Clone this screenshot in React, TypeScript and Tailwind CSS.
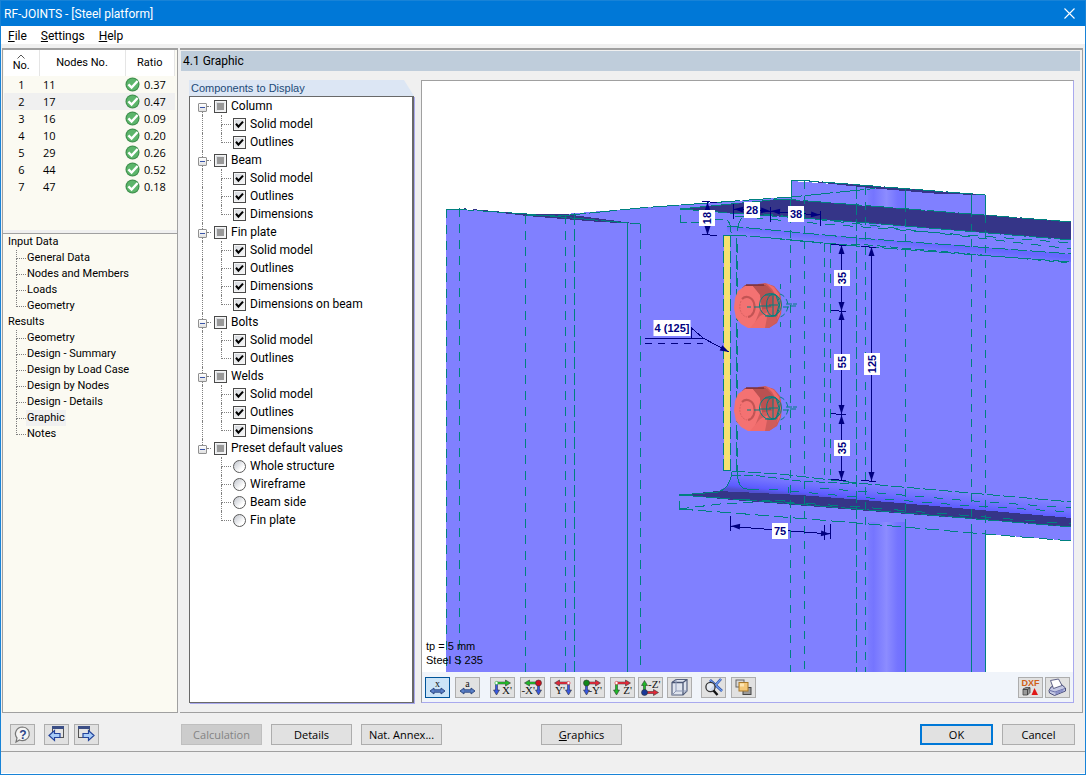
import React from "react";
import { clsx } from "clsx";

const RESULTS = [
  { no: 1, node: 11, ratio: "0.37" },
  { no: 2, node: 17, ratio: "0.47" },
  { no: 3, node: 16, ratio: "0.09" },
  { no: 4, node: 10, ratio: "0.20" },
  { no: 5, node: 29, ratio: "0.26" },
  { no: 6, node: 44, ratio: "0.52" },
  { no: 7, node: 47, ratio: "0.18" },
];

const NAVIGATION = [
  { title: "Input Data", items: ["General Data", "Nodes and Members", "Loads", "Geometry"] },
  {
    title: "Results",
    items: ["Geometry", "Design - Summary", "Design by Load Case", "Design by Nodes", "Design - Details", "Graphic", "Notes"],
  },
];

const COMPONENTS = [
  { title: "Column", radio: false, items: ["Solid model", "Outlines"] },
  { title: "Beam", radio: false, items: ["Solid model", "Outlines", "Dimensions"] },
  { title: "Fin plate", radio: false, items: ["Solid model", "Outlines", "Dimensions", "Dimensions on beam"] },
  { title: "Bolts", radio: false, items: ["Solid model", "Outlines"] },
  { title: "Welds", radio: false, items: ["Solid model", "Outlines", "Dimensions"] },
  { title: "Preset default values", radio: true, items: ["Whole structure", "Wireframe", "Beam side", "Fin plate"] },
];

function Branch({ last }: { last: boolean }) {
  return (
    <span className="flex w-[10px] shrink-0 flex-col self-stretch">
      <span className="flex-1 border-b border-l border-dotted border-[#808080]" />
      <span className={clsx("flex-1", !last && "border-l border-dotted border-[#808080]")} />
    </span>
  );
}

function PassIcon() {
  return (
    <svg width="15" height="15" viewBox="0 0 15 15" className="shrink-0" aria-hidden="true">
      <circle cx="7.5" cy="7.5" r="7" fill="#3f8f4d" />
      <circle cx="7.5" cy="7.5" r="5.9" fill="#5cb56b" />
      <path d="M3.4 7.4 L6.6 10.6 L12.6 4" fill="none" stroke="#fff" strokeWidth="2.4" />
    </svg>
  );
}

function ResultsTable() {
  return (
    <div className="h-[180px] bg-[#fbfaf2] pr-[2px] pl-px">
      <table className="w-full table-fixed border-collapse text-[11px]">
        <colgroup>
          <col className="w-[35px]" />
          <col className="w-[86px]" />
          <col />
        </colgroup>
        <thead>
          <tr className="h-[26px] bg-white font-['Roboto',sans-serif]">
            <th className="border-r border-[#e5e5e5] p-0 font-normal">
              <span className="flex flex-col items-center">
                <svg width="8" height="5" viewBox="0 0 8 5" aria-hidden="true">
                  <path d="M0.5 4.5 L4 1 L7.5 4.5" fill="none" stroke="#555" />
                </svg>
                <span className="leading-[14px]">No.</span>
              </span>
            </th>
            <th className="border-r border-[#e5e5e5] p-0 font-normal">Nodes No.</th>
            <th className="border-r border-[#e5e5e5] p-0 font-normal">Ratio</th>
          </tr>
        </thead>
        <tbody>
          {RESULTS.map((row) => (
            <tr key={row.no} className={clsx("h-[17px] leading-[17px]", row.no === 2 && "bg-[#f0f0f0]")}>
              <td className="p-0 text-center">{row.no}</td>
              <td className="p-0 pl-1">{row.node}</td>
              <td className="p-0">
                <span className="flex h-[17px] items-center gap-1">
                  <PassIcon />
                  {row.ratio}
                </span>
              </td>
            </tr>
          ))}
        </tbody>
      </table>
    </div>
  );
}

function Navigation() {
  return (
    <nav className="flex-1 bg-[#fbfaf2] pl-[5px] font-['Roboto',sans-serif] text-[11px] leading-4">
      {NAVIGATION.map((group) => (
        <div key={group.title}>
          <h2>{group.title}</h2>
          <ul className="pl-2">
            {group.items.map((item, i) => (
              <li key={item} className="flex h-4 items-center">
                <Branch last={i === group.items.length - 1} />
                <a href="#view" className={clsx("px-px whitespace-nowrap", item === "Graphic" && "bg-[#f0f0f0]")}>
                  {item}
                </a>
              </li>
            ))}
          </ul>
        </div>
      ))}
    </nav>
  );
}

function CheckBox({ label, mixed }: { label: string; mixed?: boolean }) {
  return (
    <label className="flex items-center gap-1 whitespace-nowrap">
      <span className="grid place-items-center">
        <input
          type="checkbox"
          defaultChecked={!mixed}
          className="peer col-start-1 row-start-1 size-[13px] appearance-none border border-[#4a4a4a] bg-linear-to-br from-[#d2d6dc] to-[#fafafa] shadow-[inset_0_0_0_1px_#f4f4f4]"
        />
        {mixed ? (
          <span className="pointer-events-none col-start-1 row-start-1 size-[7px] bg-[#999]" />
        ) : (
          <svg
            width="9"
            height="9"
            viewBox="0 0 9 9"
            className="pointer-events-none invisible col-start-1 row-start-1 peer-checked:visible"
            aria-hidden="true"
          >
            <path d="M1 3.8 L3.4 6.6 L8 1.6" fill="none" stroke="#000" strokeWidth="2.1" />
          </svg>
        )}
      </span>
      {label}
    </label>
  );
}

function RadioButton({ label }: { label: string }) {
  return (
    <label className="flex items-center gap-1 whitespace-nowrap">
      <input
        type="radio"
        name="preset"
        className="size-[13px] appearance-none rounded-full border border-[#5a5a5a] bg-linear-to-br from-[#c0c4cc] to-white to-70% checked:bg-[#666]"
      />
      {label}
    </label>
  );
}

function ComponentTree() {
  return (
    <section className="flex w-[225px] shrink-0 flex-col">
      <h2 className="h-4 bg-[#dce6f4] pl-[2px] font-['Liberation_Sans',sans-serif] text-[11px] leading-4 text-[#1c4a78] [clip-path:polygon(0_0,calc(100%-10px)_0,100%_100%,0_100%)]">
        Components to Display
      </h2>
      <ul className="flex-1 border border-r-2 border-[#696969] bg-white pl-2 font-['Roboto',sans-serif] text-[12px] leading-[18px] shadow-[1px_1px_0_#a9a9ee]">
        {COMPONENTS.map((group, g) => {
          const lastGroup = g === COMPONENTS.length - 1;
          return (
            <li key={group.title}>
              <div className="flex h-[18px] items-center">
                <span className="flex w-[9px] flex-col items-center self-stretch">
                  <span className={clsx("h-[6px]", g > 0 && "border-l border-dotted border-[#808080]")} />
                  <button
                    aria-label={"Collapse " + group.title}
                    className="grid size-[9px] shrink-0 place-items-center rounded-[1px] border border-[#919191] bg-linear-to-b from-white to-[#e0e0e0]"
                  >
                    <span className="h-px w-[5px] bg-[#3a55a8]" />
                  </button>
                  {!lastGroup && <span className="flex-1 border-l border-dotted border-[#808080]" />}
                </span>
                <span className="mr-[3px] w-1 border-b border-dotted border-[#808080]" />
                <CheckBox label={group.title} mixed />
              </div>
              <ul className="pl-1">
                {group.items.map((item, i) => (
                  <li key={item} className="flex h-[18px] items-center">
                    <span className={clsx("w-[19px] self-stretch", !lastGroup && "border-l border-dotted border-[#808080]")} />
                    <Branch last={i === group.items.length - 1} />
                    <span className="w-[2px]" />
                    {group.radio ? <RadioButton label={item} /> : <CheckBox label={item} />}
                  </li>
                ))}
              </ul>
            </li>
          );
        })}
      </ul>
    </section>
  );
}

function Bolt({ y }: { y: number }) {
  return (
    <g transform={`translate(0 ${y})`}>
      <path d="M758 -22 L765 -23 L774 -20 L780 -13 L782 -2 L781 8 L777 17 L769 22 L760 22 L752 12 Z" fill="#cc5858" />
      <path d="M766 -23 L774 -19 L779 -12 L781 0 L780 8 L777 14 L779 4 L777 -8 L772 -17 Z" fill="#f06c6c" />
      <path d="M745 -21 L766 -21 L762 -14 L752 -17 L742 -18 Z" fill="#a84848" />
      <path d="M735 -8 L738 -15 L745 -20 L753 -20 L760 -12 L762 2 L766 22 L748 22 L741 18 L736 12 L734 2 Z" fill="#f47272" />
      <path d="M753 -20 L767 -20 L774 -12 L772 2 L762 4 L760 -11 Z" fill="#b95151" />
      <path d="M760 4 L775 1 L777 16 L769 22 L753 22 Z" fill="#cf5c5c" />
      <path d="M760 10 L768 6 L765 22 L750 22 Z" fill="#f06c6c" />
      <path d="M746 -21 L764 -21" stroke="#7c3038" strokeWidth="1.5" />
      <path d="M742 -7 C746 -11 752 -9 754 -3 C756 4 753 10 748 11" fill="none" stroke="#c35454" strokeWidth="2" />
      <path d="M741 -5 C738 2 741 10 747 11" fill="none" stroke="#d86262" strokeWidth="1" strokeDasharray="2 1" />
      <g fill="none" stroke="#008080">
        <ellipse cx="770.5" cy="-1" rx="11" ry="11.5" />
        <ellipse cx="773" cy="-1" rx="6.5" ry="11" />
        <path d="M765 -11 L776 -11 L779 -1 L776 10 L765 10" />
        <path d="M780 -12 A11 12 0 0 1 780 11" strokeDasharray="5 3" />
        <path d="M747 1 h4 m3 0 h6 M759 0 h12 M773 -10 v20 M769 -1 h9 M786 -2 h6 M790 0 h6 M783 1 h6 M793 -2 h4" />
        <path d="M780.5 -22 v5 M780.5 16 v5" />
      </g>
    </g>
  );
}

function Arrow({ x, y, angle }: { x: number; y: number; angle: number }) {
  return <path d="M0 0 L-9 -3 L-9 3 Z" fill="#000080" transform={`translate(${x} ${y}) rotate(${angle})`} />;
}

function DimLabel({ x, y, text, vertical, width = 16 }: { x: number; y: number; text: string; vertical?: boolean; width?: number }) {
  return (
    <g transform={`translate(${x} ${y})${vertical ? " rotate(-90)" : ""}`}>
      <rect x={-width / 2} y="-8" width={width} height="16" fill="#fff" />
      <text y="4" textAnchor="middle" fill="#000080" fontSize="11" fontWeight="700" fontFamily="Liberation Sans, sans-serif">
        {text}
      </text>
    </g>
  );
}

function JointModel() {
  return (
    <svg
      viewBox="422 81 650 591"
      preserveAspectRatio="xMinYMin slice"
      className="block h-full w-full"
      role="img"
      aria-label="Fin plate joint model"
    >
      <defs>
        <linearGradient id="bottomFillet" gradientUnits="userSpaceOnUse" x1="900" y1="486" x2="898" y2="506">
          <stop offset="0" stopColor="#8080ff" />
          <stop offset="0.4" stopColor="#7272ff" />
          <stop offset="0.8" stopColor="#5c5cff" />
          <stop offset="1" stopColor="#5050d0" />
        </linearGradient>
        <linearGradient id="topFillet" gradientUnits="userSpaceOnUse" x1="900" y1="241" x2="899" y2="251">
          <stop offset="0" stopColor="#6868ff" />
          <stop offset="1" stopColor="#8080ff" />
        </linearGradient>
        <linearGradient id="webFillet" x1="0" x2="1" y1="0" y2="0">
          <stop offset="0" stopColor="#7c7cff" />
          <stop offset="0.15" stopColor="#7575ff" />
          <stop offset="0.5" stopColor="#8c8cff" />
          <stop offset="0.8" stopColor="#7474ff" />
          <stop offset="1" stopColor="#7070ff" />
        </linearGradient>
      </defs>

      <g shapeRendering="crispEdges">
        <path
          d="M446 209 L460 209 L525 214 L565 214 L640 208 L680 205 L791 197 L791 181 L985 195 L985 215 L1072 222 L1072 541 L985 534 L985 672 L446 672 Z"
          fill="#8080ff"
        />
        <rect x="868" y="188" width="37" height="40" fill="url(#webFillet)" />
        <rect x="868" y="522" width="37" height="150" fill="url(#webFillet)" />
        <path d="M460 208 L527 214 L565 214 L640 224 L600 222 L527 216 Z" fill="#353588" />
        <path d="M804 181 L875 186 L985 195 L940 194 L870 188 Z" fill="#353588" />
        <path d="M680 209 L783 199 L791 200 L1072 222 L1072 240 L973 232 L857 222 L730 213 Z" fill="#353588" />
        <path d="M727 226 L760 229 L857 238 L1072 254 L1072 262 L857 247 L760 237 L727 235 Z" fill="url(#topFillet)" />
        <path d="M731 472 L857 483 L1072 502 L1072 522 L900 508 L733 496 L716 493 L727 486 L731 477 Z" fill="url(#bottomFillet)" />
        <path d="M679 495 L718 491 L800 495 L900 503 L1072 518 L1072 527 L857 510 L733 500 Z" fill="#353588" />
      </g>

      <g stroke="#008080" fill="none" shapeRendering="crispEdges">
        <path d="M446 209.5 H460 L527 214 L640 224 M527 215.5 H565 L640 208 L680 205 L791 197 L875 188.5 M791 180.5 H804 L985 195 M985.5 195 V215 M791.5 181 V200 M680 209 L783 199 L1072 222" strokeDasharray="28 3" />
        <path d="M680 209 L730 213 L857 222 L1072 240" strokeDasharray="22 3" />
        <path d="M680 215 V222 H700 L720 219 H725 C732 222 731 230 731 235 M756 207 C742 214 737 222 737 236" strokeDasharray="14 4" />
        <path d="M727 226 L760 229 L857 238 L1072 254 M731 235 L760 237 L857 246 L1072 262" strokeDasharray="16 3" />
        <path d="M760 237 L830 244 L857 244 L1072 263" strokeDasharray="9 4" />
        <path d="M735 216 L800 222 L900 230 L1072 243 M745 212 L860 224 L1072 249" strokeDasharray="10 8" />

        <path
          d="M446.5 209 V672 M459.5 208 V672 M525.5 215 V672 M565.5 215 V672 M640.5 224 V672"
          strokeDasharray="9 7"
        />
        <path d="M790.5 200 V672 M804.5 181 V672 M865.5 187 V672 M905.5 189 V527 M971.5 194 V532 M985.5 215 V534" strokeDasharray="8 7" />
        <path d="M574.5 213 V672 M856.5 187 V672" strokeDasharray="12 4" />
        <path d="M824.5 243 V475 M830.5 244 V475" strokeDasharray="9 6" />
        <path d="M627.5 223 V672 M905.5 527 V672 M971.5 532 V672 M985.5 534 V672 M905.5 189 V209 M971.5 194 V214" />

        <path d="M732 471 L780 474 L857 483 L1072 502" strokeDasharray="13 3" />
        <path d="M732 475 L760 476 L800 481 L857 484" strokeDasharray="9 3" />
        <path d="M731 472 V477 C728 487 724 490 718 492 L679 495 M737 472 C738 486 742 490 750 489" />
        <path d="M679 495 L733 499 L857 509 L1072 527" strokeDasharray="24 3" />
        <path d="M740 499 L860 507 L1072 524" strokeDasharray="10 12" />
        <path d="M750 489 H780 M788 487 V493 M790 491 L857 497 L960 505 L1072 512 M820 488 L960 500 L1072 508" strokeDasharray="9 10" />
        <path d="M679.5 501 V509 M679 509 L733 513 L857 523 L985 534 L1072 541" strokeDasharray="14 5" />
        <path d="M679 509 L720 504 L790 500" strokeDasharray="10 6" />
      </g>

      <rect x="724" y="236" width="6" height="235" fill="#f5e170" shapeRendering="crispEdges" />
      <g stroke="#008080" fill="none" shapeRendering="crispEdges">
        <path d="M723.5 235 V471 M730.5 235 V471" strokeDasharray="12 4" />
        <path d="M736.5 238 V472" strokeDasharray="14 3" />
        <path d="M737.5 244 V472" strokeDasharray="9 8" />
        <path d="M724 235.5 H731 M724 470.5 H731" />
      </g>

      <Bolt y={306} />
      <Bolt y={409} />

      <g stroke="#000080" fill="none" shapeRendering="crispEdges">
        <path d="M841.5 245 V480 M871.5 247 V481 M831 244.5 L846 245.5 M831 310.5 L846 311.5 M831 413.5 L846 415 M831 479.5 L846 480.5 M861 246.5 L876 247.5 M861 480.5 L876 481.5" />
        <path d="M707.5 202 V235 M702 201.5 L717 202.5 M702 234.5 L717 235.5" />
        <path d="M733.5 204 V219 M770.5 207 V222 M820.5 211 V226 M734 209 L820 215" />
        <path d="M730.5 516 V531 M824.5 525 V540 M830.5 524 V539 M731 526.5 L830 534" />
        <path d="M645 338.5 H703 M691.5 338 V328 L703 338" />
        <path d="M703 338 L729 352" />
        <path d="M645 343.5 H703" strokeDasharray="7 6" />
      </g>
      <Arrow x={841.5} y={245} angle={-90} />
      <Arrow x={841.5} y={311} angle={90} />
      <Arrow x={841.5} y={311} angle={-90} />
      <Arrow x={841.5} y={414} angle={90} />
      <Arrow x={841.5} y={415} angle={-90} />
      <Arrow x={841.5} y={480} angle={90} />
      <Arrow x={871.5} y={247} angle={-90} />
      <Arrow x={871.5} y={481} angle={90} />
      <Arrow x={707.5} y={202} angle={-90} />
      <Arrow x={707.5} y={235} angle={90} />
      <Arrow x={734} y={209} angle={184} />
      <Arrow x={770} y={211} angle={4} />
      <Arrow x={771} y={211} angle={184} />
      <Arrow x={820} y={215} angle={4} />
      <Arrow x={731} y={526} angle={184} />
      <Arrow x={830} y={534} angle={4} />
      <Arrow x={729} y={352} angle={27} />
      <DimLabel x={842} y={278} text="35" vertical />
      <DimLabel x={842} y={362} text="55" vertical />
      <DimLabel x={842} y={448} text="35" vertical />
      <DimLabel x={872} y={364} text="125" vertical width={22} />
      <DimLabel x={707} y={218} text="18" vertical />
      <DimLabel x={752} y={210} text="28" />
      <DimLabel x={796} y={214} text="38" />
      <DimLabel x={780} y={531} text="75" />
      <DimLabel x={672} y={328} text="4 (125]" width={37} />

      <g fill="#000" fontSize="11" fontFamily="Liberation Sans, sans-serif">
        <text x="426" y="650">tp = 5 mm</text>
        <text x="426" y="664">Steel S 235</text>
      </g>
    </svg>
  );
}

const RED = "#e02838";
const GREEN = "#20b828";
const BLUE = "#3858e0";

type AxisProps = { h: string; v: string; label: string; origin?: string; flip?: boolean; up?: boolean };

function AxisIcon({ h, v, label, origin, flip, up }: AxisProps) {
  const ox = flip ? 17.5 : 5.5;
  const oy = up ? 14.5 : 5;
  const dir = flip ? -1 : 1;
  const vdir = up ? -1 : 1;
  return (
    <svg width="23" height="19" viewBox="0 0 23 19" aria-hidden="true">
      <path d={`M${ox} ${oy} h${dir * 9}`} stroke="#444" strokeWidth="2.6" />
      <path d={`M${ox} ${oy} v${vdir * 8}`} stroke="#444" strokeWidth="2.6" />
      <path d={`M${ox + dir * 14} ${oy} l${dir * -5} -3 v6 Z`} fill={h} stroke="#333" strokeWidth="0.6" />
      <path d={`M${ox} ${oy + vdir * 12} l-3 ${vdir * -5} h6 Z`} fill={v} stroke="#333" strokeWidth="0.6" />
      <path d={`M${ox} ${oy} h${dir * 10}`} stroke={h} strokeWidth="1.8" />
      <path d={`M${ox} ${oy} v${vdir * 9}`} stroke={v} strokeWidth="1.8" />
      <circle cx={ox} cy={oy} r={origin ? 3 : 1.6} fill={origin || "#fff"} stroke={origin ? "#333" : h} strokeWidth="0.6" />
      <text
        x={flip ? 14 : up ? 9 : 21}
        y={up ? 10 : 16}
        textAnchor={up ? "start" : "end"}
        fontSize="11"
        fontFamily="Liberation Serif, serif"
        fill="#111"
      >
        {label}
      </text>
    </svg>
  );
}

function SpanIcon({ label }: { label: string }) {
  return (
    <svg width="23" height="19" viewBox="0 0 23 19" aria-hidden="true">
      <text x="11.5" y="9" textAnchor="middle" fontSize="10" fontFamily="Liberation Serif, serif" fill="#111">
        {label}
      </text>
      <path d="M4 13 L8 10 V11.8 H15 V10 L19 13 L15 16 V14.2 H8 V16 Z" fill="#5a80c8" stroke="#24407c" strokeWidth="0.9" />
    </svg>
  );
}

function CubeIcon() {
  return (
    <svg width="23" height="19" viewBox="0 0 23 19" fill="none" aria-hidden="true">
      <path d="M4 4.5 L8 1.5 H19 V13 L15 17 H4 Z" fill="#dfe4ee" stroke="#55617e" strokeWidth="1.2" />
      <path d="M4 4.5 H15 V17 M15 4.5 L19 1.5" stroke="#4a5674" strokeWidth="1.3" />
      <path d="M8 1.5 V13 H19 M8 13 L4 17" stroke="#8b97b4" />
    </svg>
  );
}

function ZoomIcon() {
  return (
    <svg width="23" height="19" viewBox="0 0 23 19" fill="none" aria-hidden="true">
      <path d="M8 2 L20 13 M19 1 L9 12" stroke="#2448a0" strokeWidth="2.6" />
      <path d="M8 2 L20 13 M19 1 L9 12" stroke="#6f9cf0" strokeWidth="1.2" />
      <circle cx="8.5" cy="9" r="4.6" fill="#e8eef4" fillOpacity="0.8" stroke="#333" strokeWidth="1.3" />
      <path d="M11.5 12.5 L15.5 17" stroke="#111" strokeWidth="2.4" />
    </svg>
  );
}

function LayersIcon() {
  return (
    <svg width="23" height="19" viewBox="0 0 23 19" aria-hidden="true">
      <rect x="4" y="2" width="8" height="7" fill="#d8d8d8" stroke="#666" />
      <rect x="11" y="9.5" width="8" height="7" fill="#9a9a9a" stroke="#444" />
      <rect x="7" y="4.5" width="9" height="8.5" fill="#f4c878" stroke="#a87828" />
      <path d="M8 5.5 h4 v3 h-4 z" fill="#fde6b4" />
    </svg>
  );
}

function DxfIcon() {
  return (
    <svg width="23" height="19" viewBox="0 0 23 19" aria-hidden="true">
      <text x="11.5" y="8" textAnchor="middle" fontSize="9" fontWeight="700" fontFamily="Liberation Sans, sans-serif" fill="#d06018">
        DXF
      </text>
      <path d="M4 11 L7 9.5 H11 V14.5 L8.5 17 H4 Z" fill="#999" stroke="#444" strokeWidth="0.8" />
      <path d="M4 11.5 H8.5 V17 M8.5 11.5 L11 9.8" fill="none" stroke="#333" strokeWidth="0.8" />
      <path d="M15.5 10 L19 17 H12.5 Z" fill="#e01818" />
    </svg>
  );
}

function PrinterIcon() {
  return (
    <svg width="23" height="19" viewBox="0 0 23 19" aria-hidden="true">
      <path d="M3 12.5 L5 9 L15 6 L19.5 10 V13 L8.5 17.5 L3.5 15 Z" fill="#c4c8e4" stroke="#4a4e7c" />
      <path d="M4.5 2.5 L12.5 1 L16 7.5 L7.5 10.5 Z" fill="#fff" stroke="#50547c" strokeWidth="0.9" />
      <path d="M4 12.5 L9 14 L19 10.5" fill="none" stroke="#6a70a8" />
      <path d="M9.5 14 L17.5 11.3 V13.5 L9.5 16.5 Z" fill="#8a90c8" />
    </svg>
  );
}

function ToolButton({ label, active, children }: { label: string; active?: boolean; children: React.ReactNode }) {
  return (
    <button
      aria-label={label}
      className={clsx(
        "grid h-[21px] w-[25px] shrink-0 place-items-center border",
        active ? "border-[#005499] bg-[#cce4f7]" : "border-[#adadad] bg-[#e1e1e1]",
      )}
    >
      {children}
    </button>
  );
}

function GraphicView() {
  return (
    <section className="flex min-w-0 flex-1 flex-col border border-t-[#a0a0a0] border-r-[#a9a9ee] border-b-[#a9a9ee] border-l-[#a0a0a0] bg-white">
      <div className="h-[591px] flex-1 pr-[2px]">
        <JointModel />
      </div>
      <div className="flex h-[30px] items-center bg-[#f0f4fa] pr-[3px] pl-[3px]">
        <div className="flex gap-[5px]">
          <ToolButton label="Show dimension values" active>
            <SpanIcon label="x" />
          </ToolButton>
          <ToolButton label="Show dimension symbols">
            <SpanIcon label="a" />
          </ToolButton>
        </div>
        <div className="ml-[10px] flex gap-[5px]">
          <ToolButton label="View in X'">
            <AxisIcon h={GREEN} v={BLUE} label="X'" />
          </ToolButton>
          <ToolButton label="View in -X'">
            <AxisIcon h={GREEN} v={BLUE} label="-X'" origin="#d01020" flip />
          </ToolButton>
          <ToolButton label="View in Y'">
            <AxisIcon h={RED} v={BLUE} label="Y'" flip />
          </ToolButton>
          <ToolButton label="View in -Y'">
            <AxisIcon h={RED} v={BLUE} label="-Y'" origin="#108818" />
          </ToolButton>
          <ToolButton label="View in Z'">
            <AxisIcon h={RED} v={GREEN} label="Z'" />
          </ToolButton>
        </div>
        <div className="ml-[3px] flex gap-1">
          <ToolButton label="View in -Z'">
            <AxisIcon h={RED} v={GREEN} label="-Z'" origin="#183898" up />
          </ToolButton>
          <ToolButton label="Isometric view">
            <CubeIcon />
          </ToolButton>
        </div>
        <div className="ml-[9px] flex gap-[5px]">
          <ToolButton label="Zoom all">
            <ZoomIcon />
          </ToolButton>
          <ToolButton label="Display layers">
            <LayersIcon />
          </ToolButton>
        </div>
        <div className="ml-auto flex gap-[2px]">
          <ToolButton label="Export DXF">
            <DxfIcon />
          </ToolButton>
          <ToolButton label="Print">
            <PrinterIcon />
          </ToolButton>
        </div>
      </div>
    </section>
  );
}

function HelpIcon() {
  return (
    <svg width="23" height="19" viewBox="0 0 23 19" aria-hidden="true">
      <path d="M11.5 2 A7 6.8 0 1 1 8.5 15 L5 17 L6 13 A7 6.8 0 0 1 11.5 2 Z" fill="#f4f4f4" stroke="#777" strokeWidth="1.2" />
      <text x="11.8" y="13.5" textAnchor="middle" fontSize="12" fontWeight="700" fontFamily="Liberation Sans, sans-serif" fill="#2c4488">
        ?
      </text>
    </svg>
  );
}

function TableIcon({ next }: { next?: boolean }) {
  return (
    <svg width="23" height="19" viewBox="0 0 23 19" aria-hidden="true">
      <rect x={next ? 3.5 : 7.5} y="1.5" width="11" height="11" fill="#e4e4e4" stroke="#555" />
      <rect x={next ? 3 : 7} y="1" width="12" height="3" fill="#3c4f86" />
      <path
        d={next ? "M19 10.5 L13.5 5.5 V8.5 H8 V12.5 H13.5 V15.5 Z" : "M4 10.5 L9.5 5.5 V8.5 H15 V12.5 H9.5 V15.5 Z"}
        fill="#a8ccf8"
        stroke="#24449c"
        strokeWidth="1.2"
      />
    </svg>
  );
}

function DialogButton({ children, wide, primary, disabled }: { children: React.ReactNode; wide?: boolean; primary?: boolean; disabled?: boolean }) {
  return (
    <button
      disabled={disabled}
      className={clsx(
        "flex h-[21px] items-center justify-center text-[11px] leading-none",
        wide ? "w-[81px]" : "w-[73px]",
        primary ? "border-2 border-[#0078d7]" : "border border-[#adadad]",
        disabled ? "border-[#bfbfbf] bg-[#cccccc] text-[#838383]" : "bg-[#e1e1e1]",
      )}
    >
      {children}
    </button>
  );
}

export default function App() {
  return (
    <div className="flex min-h-screen flex-col border border-[#1883d7] bg-[#f0f0f0] font-['Open_Sans','Noto_Sans',sans-serif] text-black">
      <header className="flex h-[25px] items-center justify-between bg-[#0078d7] pr-[10px] pl-[3px] font-['Roboto',sans-serif] text-white">
        <h1 className="text-[12px]">RF-JOINTS - [Steel platform]</h1>
        <button aria-label="Close">
          <svg width="11" height="11" viewBox="0 0 11 11" aria-hidden="true">
            <path d="M0.5 0.5 L10.5 10.5 M10.5 0.5 L0.5 10.5" stroke="#fff" strokeWidth="1.1" />
          </svg>
        </button>
      </header>

      <nav className="flex h-[18px] items-center gap-[14px] bg-white pt-px pl-[7px] font-['Roboto',sans-serif] text-[12px]">
        <button><u>F</u>ile</button>
        <button><u>S</u>ettings</button>
        <button><u>H</u>elp</button>
      </nav>

      <div className="mt-1 flex flex-1 gap-[2px] pl-px">
        <aside className="flex w-[176px] shrink-0 flex-col border border-t-2 border-[#a0a0a0]">
          <ResultsTable />
          <div className="h-1 border-b border-[#a0a0a0]" />
          <Navigation />
        </aside>

        <main className="mr-[2px] flex min-w-0 flex-1 flex-col border-t-2 border-r border-b border-[#a0a0a0] pb-[9px]">
          <h2 className="mt-px mr-[2px] ml-px h-5 bg-[#bfcddb] pl-[2px] font-['Roboto',sans-serif] text-[12px] leading-5">4.1 Graphic</h2>
          <div className="flex flex-1 gap-[7px] pt-[9px] pr-2 pl-[9px]">
            <ComponentTree />
            <GraphicView />
          </div>
        </main>
      </div>

      <footer>
        <div className="flex h-[39px] items-center border-b border-[#a0a0a0] pt-[4px] pr-[10px] pl-[9px]">
          <ToolButton label="Help">
            <HelpIcon />
          </ToolButton>
          <div className="ml-[9px] flex gap-[5px]">
            <ToolButton label="Previous table">
              <TableIcon />
            </ToolButton>
            <ToolButton label="Next table">
              <TableIcon next />
            </ToolButton>
          </div>
          <div className="ml-[82px] flex gap-[9px]">
            <DialogButton wide disabled>Calculation</DialogButton>
            <DialogButton wide>Details</DialogButton>
            <DialogButton wide>Nat. Annex...</DialogButton>
          </div>
          <div className="ml-[99px]">
            <DialogButton wide>
              <span><u>G</u>raphics</span>
            </DialogButton>
          </div>
          <div className="ml-auto flex gap-[9px]">
            <DialogButton primary>OK</DialogButton>
            <DialogButton>Cancel</DialogButton>
          </div>
        </div>
        <div className="h-[22px] border-b border-white" />
      </footer>
    </div>
  );
}
